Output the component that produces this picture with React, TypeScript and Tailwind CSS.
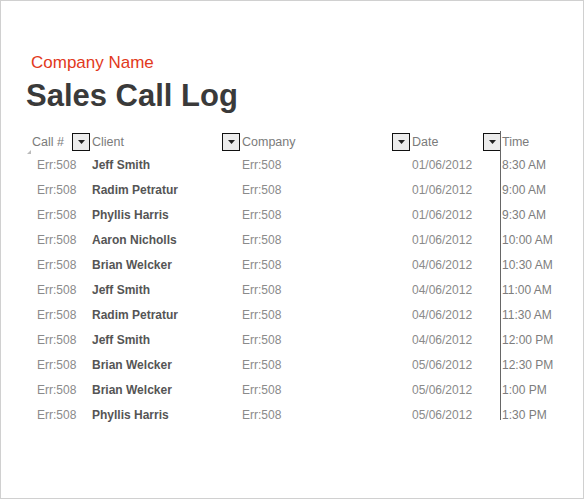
const rows = [
  ['Jeff Smith', '01/06/2012', '8:30 AM'],
  ['Radim Petratur', '01/06/2012', '9:00 AM'],
  ['Phyllis Harris', '01/06/2012', '9:30 AM'],
  ['Aaron Nicholls', '01/06/2012', '10:00 AM'],
  ['Brian Welcker', '04/06/2012', '10:30 AM'],
  ['Jeff Smith', '04/06/2012', '11:00 AM'],
  ['Radim Petratur', '04/06/2012', '11:30 AM'],
  ['Jeff Smith', '04/06/2012', '12:00 PM'],
  ['Brian Welcker', '05/06/2012', '12:30 PM'],
  ['Brian Welcker', '05/06/2012', '1:00 PM'],
  ['Phyllis Harris', '05/06/2012', '1:30 PM'],
]

function Dropdown({ className = '' }: { className?: string }) {
  return (
    <div
      className={`w-[18px] h-[18px] border border-[#111] bg-[#ececec] flex items-center justify-center shrink-0 ${className}`}
    >
      <svg width="7" height="4" viewBox="0 0 7 4">
        <polygon points="0,0 7,0 3.5,4" fill="#222" />
      </svg>
    </div>
  )
}

export default function App() {
  return (
    <div className="w-[584px] h-[499px] border border-[#d0d0d0] bg-white font-['Liberation_Sans',Arial,sans-serif]">
      <div className="pt-[52px] pl-[30px] text-[17px] leading-[20px] text-[#e2391c]">Company Name</div>
      <h1 className="mt-[5px] pl-[25px] text-[31px] leading-[36px] font-bold text-[#3a3a3a]">Sales Call Log</h1>

      <div className="mt-[17px] ml-[25px] text-[12px]">
        {/* header */}
        <div className="flex h-[22px] items-center text-[12.5px] text-[#7b7b7b]">
          <div className="relative w-[66px] h-full flex items-center justify-between pl-[6px] pr-[2px]">
            <span>Call #</span>
            <Dropdown />
            <svg className="absolute left-[1px] bottom-[-1px]" width="4" height="4" viewBox="0 0 4 4">
              <polygon points="0,4 4,0 4,4" fill="#bbb" />
            </svg>
          </div>
          <div className="w-[150px] h-full flex items-center justify-between pr-[2px]">
            <span>Client</span>
            <Dropdown />
          </div>
          <div className="w-[170px] h-full flex items-center justify-between pr-[2px]">
            <span>Company</span>
            <Dropdown />
          </div>
          <div className="w-[88px] h-full flex items-center justify-between">
            <span>Date</span>
            <Dropdown className="mr-[-1px]" />
          </div>
          <div className="h-full flex items-center border-l border-[#666] pl-[1px]">Time</div>
        </div>

        {rows.map((r, i) => (
          <div key={i} className="flex h-[25px] leading-[25px] text-[#8a8a8a]">
            <div className="w-[66px] pl-[11px]">Err:508</div>
            <div className="w-[150px] font-bold text-[#555]">{r[0]}</div>
            <div className="w-[170px]">Err:508</div>
            <div className="w-[88px]">{r[1]}</div>
            <div
              className={`border-l border-[#666] pl-[1px] text-[#7d7d7d] ${i === rows.length - 1 ? 'h-[17px] self-start' : ''}`}
            >
              {r[2]}
            </div>
          </div>
        ))}
      </div>
    </div>
  )
}
